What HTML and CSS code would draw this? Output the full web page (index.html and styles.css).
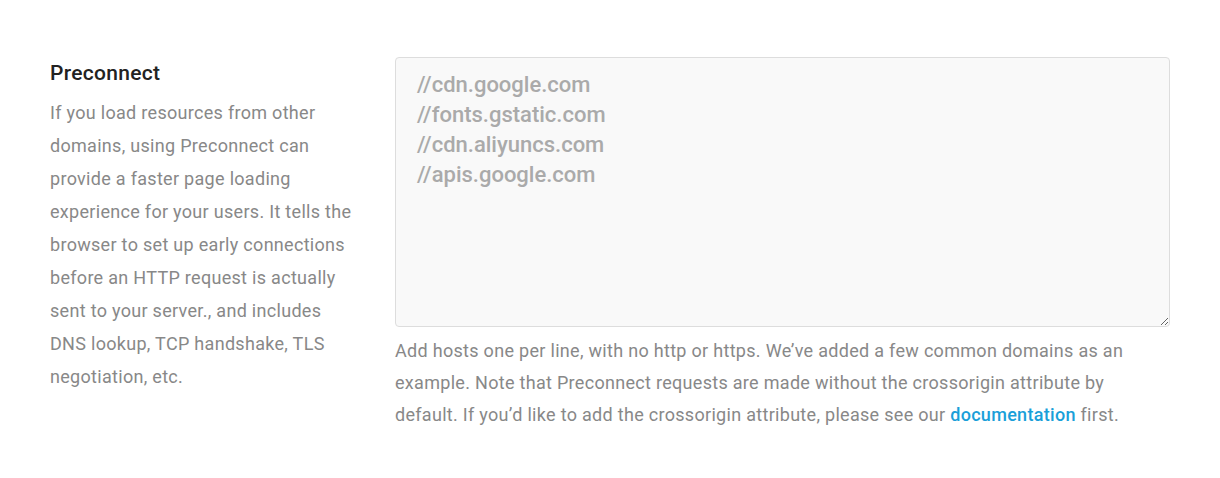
FILE: index.html
```html
<!DOCTYPE html>
<html lang="en">
<head>
<meta charset="utf-8">
<link rel="stylesheet" href="styles.css">
</head>
<body>
<div class="row">
  <div class="info">
    <h3 class="title">Preconnect</h3>
    <p class="desc">If you load resources from other domains, using Preconnect can provide a faster page loading experience for your users. It tells the browser to set up early connections before an HTTP request is actually sent to your server., and includes DNS lookup, TCP handshake, TLS negotiation, etc.</p>
  </div>
  <div class="field">
    <textarea class="hosts">//cdn.google.com
//fonts.gstatic.com
//cdn.aliyuncs.com
//apis.google.com</textarea>
    <p class="help">Add hosts one per line, with no http or https. We’ve added a few common domains as an example. Note that Preconnect requests are made without the crossorigin attribute by default. If you’d like to add the crossorigin attribute, please see our <a class="link" href="#">documentation</a> first.</p>
  </div>
</div>
</body>
</html>
```
FILE: styles.css
```css
html, body {
  margin: 0;
  padding: 0;
  background: #fff;
}
body {
  font-family: Roboto, "Liberation Sans", sans-serif;
}
.row {
  display: flex;
  padding: 57px 50px 0 50px;
  gap: 40px;
}
.info {
  width: 305px;
  flex: none;
}
.title {
  margin: 2px 0 0 0;
  font-size: 21px;
  font-weight: 500;
  letter-spacing: 0.3px;
  color: #222;
  line-height: 28px;
}
.desc {
  margin: 9px 0 0 0;
  font-size: 18px;
  letter-spacing: 0.3px;
  line-height: 33px;
  color: #888;
}
.field {
  width: 775px;
  flex: none;
}
.hosts {
  display: block;
  box-sizing: border-box;
  width: 775px;
  height: 270px;
  margin: 0;
  padding: 12px 21px;
  border: 1px solid #ddd;
  border-radius: 4px;
  background: #f9f9f9;
  font-family: Roboto, "Liberation Sans", sans-serif;
  font-size: 22px;
  font-weight: 500;
  line-height: 30px;
  color: #aaa;
  resize: vertical;
  outline: none;
}
.help {
  margin: 8px 0 0 0;
  font-size: 18px;
  letter-spacing: 0.3px;
  line-height: 32px;
  color: #888;
}
.link {
  color: #1a9fd9;
  text-decoration: none;
  font-weight: 500;
}
```
